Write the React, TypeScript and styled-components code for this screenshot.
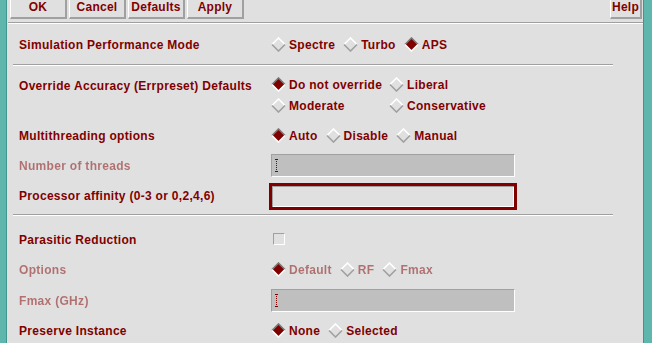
import React from 'react'
import styled, { createGlobalStyle, css } from 'styled-components'

const maroon = '#800000'
const panel = '#e0e0e0'
const shade = '#a0a0a0'

const GlobalStyle = createGlobalStyle`
  html, body {
    margin: 0;
    padding: 0;
    background: ${panel};
  }
  body {
    font-family: 'Liberation Sans', Arial, sans-serif;
  }
  * {
    box-sizing: border-box;
  }
`

// greyed-out Tk text: a 1px checkerboard laid over the glyphs
const stipple = css`
  background-image: conic-gradient(${maroon} 25%, transparent 0 50%, ${maroon} 0 75%, transparent 0);
  background-size: 2px 2px;
  background-attachment: fixed;
  -webkit-background-clip: text;
  background-clip: text;
  color: transparent;
`

const Window = styled.div`
  display: flex;
  width: 652px;
  height: 343px;
  overflow: hidden;
  background: ${panel};
`

const Strip = styled.div<{ $side: 'left' | 'right' }>`
  flex: none;
  width: ${(p) => (p.$side === 'left' ? 7 : 9)}px;
  background: #5fb6ac;
  ${(p) => (p.$side === 'left' ? 'border-right: 1px solid #3e968d;' : 'border-left: 1px solid #3e968d;')}
`

const Main = styled.div`
  flex: 1;
  display: flex;
  flex-direction: column;
  min-width: 0;
`

const Toolbar = styled.div`
  display: flex;
  gap: 2px;
  margin-top: -6px;
  padding: 0 1px 0 3px;
`

const Button = styled.button<{ $push?: boolean }>`
  width: ${(p) => (p.$push ? 32 : 57)}px;
  height: 25px;
  margin-left: ${(p) => (p.$push ? 'auto' : '0')};
  padding: 1px 0 0;
  background: ${panel};
  border-style: solid;
  border-width: 1px 2px 2px 1px;
  border-color: #fff ${shade} ${shade} #fff;
  color: ${maroon};
  font: bold 12px 'Liberation Sans', Arial, sans-serif;
  letter-spacing: 0.25px;
  line-height: 20px;
`

const Divider = styled.div<{ $inset?: boolean }>`
  height: 2px;
  border-top: 1px solid ${shade};
  border-bottom: 1px solid #fff;
  margin: ${(p) => (p.$inset ? '0 30px 0 6px' : '3px 0 0 1px')};
`

const Section = styled.div<{ $top: number; $bottom: number }>`
  padding: ${(p) => p.$top}px 0 ${(p) => p.$bottom}px 12px;
  display: flex;
  flex-direction: column;
`

const Row = styled.div<{ $gap?: number; $top?: boolean }>`
  display: grid;
  grid-template-columns: 252px 1fr;
  align-items: ${(p) => (p.$top ? 'start' : 'center')};
  height: ${(p) => (p.$top ? 'auto' : '30px')};
  margin-top: ${(p) => p.$gap ?? 0}px;
`

const Label = styled.span<{ $disabled?: boolean }>`
  padding-top: 2px;
  font-weight: bold;
  font-size: 12px;
  letter-spacing: 0.3px;
  line-height: 21px;
  color: ${maroon};
  white-space: nowrap;
  ${(p) => p.$disabled && stipple}
`

const Options = styled.div`
  display: flex;
  gap: 8px;
`

const OptionGrid = styled.div`
  display: grid;
  grid-template-columns: 118px auto;
  grid-auto-rows: 21px;
  align-items: center;
`

const Option = styled.span`
  display: inline-flex;
  align-items: center;
  gap: 3px;
`

const Entry = styled.div<{ $focused?: boolean }>`
  display: flex;
  align-items: center;
  width: 244px;
  height: 23px;
  padding-left: 2px;
  background: #bfbfbf;
  border-style: solid;
  border-width: 1px;
  border-color: ${shade} #fff #fff ${shade};
  ${(p) =>
    p.$focused &&
    css`
      width: 248px;
      height: 27px;
      margin: 2px 0 0 -2px;
      background: ${panel};
      border: 3px solid ${maroon};
      box-shadow: inset 1px 1px ${shade}, inset -1px -1px #fff;
    `}
`

const Check = styled.span`
  display: block;
  width: 12px;
  height: 12px;
  margin-left: 2px;
  border: 1px solid;
  border-color: ${shade} #fff #fff ${shade};
`

const Diamond = ({ on }: { on?: boolean }) => (
  <svg width="15" height="15" viewBox="0 0 15 15">
    <polygon points="7.5,1 14,7.5 7.5,14 1,7.5" fill={on ? maroon : 'none'} />
    <polyline points="1,7.5 7.5,1 14,7.5" fill="none" stroke={on ? '#7a7a7a' : '#fff'} strokeWidth="1.6" />
    <polyline points="1,7.5 7.5,14 14,7.5" fill="none" stroke={on ? '#fff' : shade} strokeWidth="1.6" />
  </svg>
)

const Cursor = () => (
  <svg width="5" height="15" viewBox="0 0 5 15" shapeRendering="crispEdges">
    <path d="M2.5 1v13M1 1.5h3M1 13.5h3" stroke={maroon} strokeWidth="1" strokeDasharray="1 1" fill="none" />
  </svg>
)

const Radio = ({ label, on, disabled }: { label: string; on?: boolean; disabled?: boolean }) => (
  <Option>
    <Diamond on={on} />
    <Label $disabled={disabled}>{label}</Label>
  </Option>
)

const App = () => (
  <Window>
    <GlobalStyle />
    <Strip $side="left" />
    <Main>
      <Toolbar>
        <Button>OK</Button>
        <Button>Cancel</Button>
        <Button>Defaults</Button>
        <Button>Apply</Button>
        <Button $push>Help</Button>
      </Toolbar>
      <Divider />

      <Section $top={5} $bottom={5}>
        <Row>
          <Label>Simulation Performance Mode</Label>
          <Options>
            <Radio label="Spectre" />
            <Radio label="Turbo" />
            <Radio label="APS" on />
          </Options>
        </Row>
      </Section>
      <Divider $inset />

      <Section $top={8} $bottom={4}>
        <Row $top>
          <Label>Override Accuracy (Errpreset) Defaults</Label>
          <OptionGrid>
            <Radio label="Do not override" on />
            <Radio label="Liberal" />
            <Radio label="Moderate" />
            <Radio label="Conservative" />
          </OptionGrid>
        </Row>
        <Row $gap={4}>
          <Label>Multithreading options</Label>
          <Options>
            <Radio label="Auto" on />
            <Radio label="Disable" />
            <Radio label="Manual" />
          </Options>
        </Row>
        <Row>
          <Label $disabled>Number of threads</Label>
          <Entry>
            <Cursor />
          </Entry>
        </Row>
        <Row>
          <Label>Processor affinity (0-3 or 0,2,4,6)</Label>
          <Entry $focused />
        </Row>
      </Section>
      <Divider $inset />

      <Section $top={8} $bottom={0}>
        <Row>
          <Label>Parasitic Reduction</Label>
          <Check />
        </Row>
        <Row>
          <Label $disabled>Options</Label>
          <Options>
            <Radio label="Default" on disabled />
            <Radio label="RF" disabled />
            <Radio label="Fmax" disabled />
          </Options>
        </Row>
        <Row $gap={1}>
          <Label $disabled>Fmax (GHz)</Label>
          <Entry>
            <Cursor />
          </Entry>
        </Row>
        <Row>
          <Label>Preserve Instance</Label>
          <Options>
            <Radio label="None" on />
            <Radio label="Selected" />
          </Options>
        </Row>
      </Section>
    </Main>
    <Strip $side="right" />
  </Window>
)

export default App
